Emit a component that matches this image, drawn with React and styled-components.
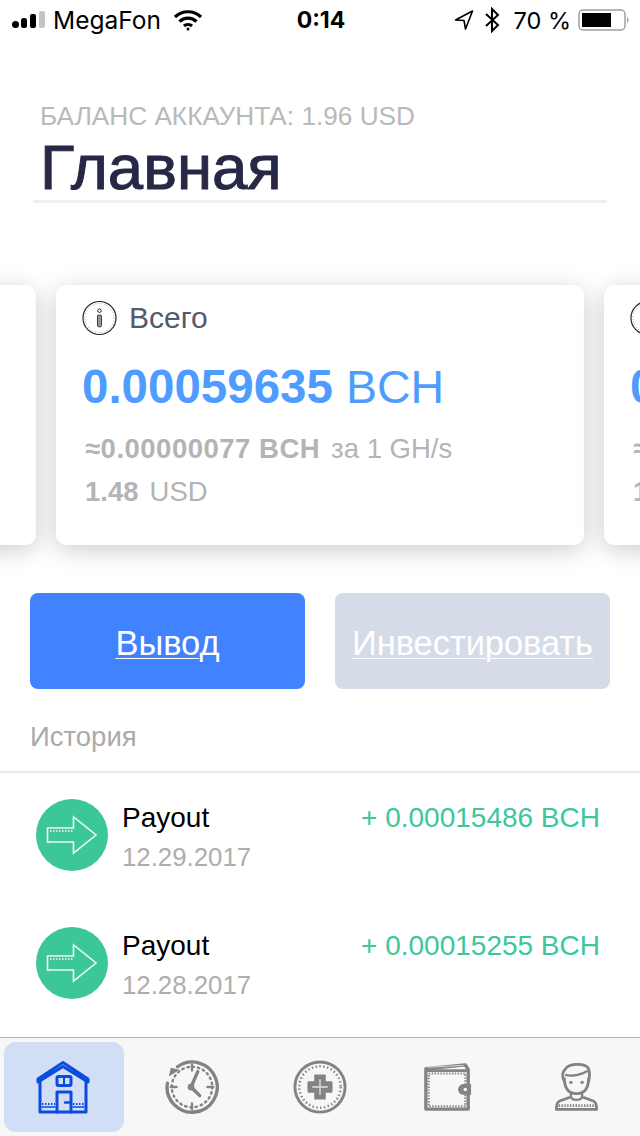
import React from "react";
import styled, { createGlobalStyle } from "styled-components";

const GlobalStyle = createGlobalStyle`
  html, body { margin: 0; padding: 0; background: #fff; }
  * { box-sizing: border-box; }
  body { font-family: "Liberation Sans", Arial, sans-serif; }
`;

const Page = styled.div`
  width: 640px;
  height: 1136px;
  display: flex;
  flex-direction: column;
  overflow: hidden;
  background: #fff;
`;

/* status bar */
const StatusBar = styled.div`
  height: 40px;
  flex: none;
  padding: 0 10px 0 12px;
  display: grid;
  grid-template-columns: 1fr auto 1fr;
  align-items: center;
  font-family: Inter, sans-serif;
  font-size: 23px;
  color: #000;
`;
const StatusSide = styled.div`
  display: flex;
  align-items: center;
  justify-content: ${(p) => (p.$end ? "flex-end" : "flex-start")};
  gap: ${(p) => (p.$end ? "10px" : "8px")};
`;
const Carrier = styled.span`
  font-size: 24.5px;
  margin-right: 4px;
`;
const Percent = styled.span`
  font-size: 23.5px;
  margin: 0 -3px 0 4px;
`;
const StatusTime = styled.div`
  font-weight: 700;
`;

/* header */
const Header = styled.header`
  margin: 62px 33px 0;
  height: 101px;
  border-bottom: 3px solid #eff0f3;
`;
const Balance = styled.div`
  padding-left: 7px;
  margin-bottom: 1px;
  font-size: 26.2px;
  line-height: 28px;
  color: #b9b9b9;
`;
const Title = styled.h1`
  margin: 0;
  padding-left: 7px;
  font-size: 63.5px;
  line-height: 72px;
  font-weight: 400;
  color: #262845;
  -webkit-text-stroke: 1px #262845;
`;

/* cards */
const Carousel = styled.div`
  margin-top: 52px;
  padding: 30px 0 32px;
  display: flex;
  justify-content: center;
  gap: 20px;
  overflow: hidden;
`;
const Card = styled.section`
  flex: none;
  width: 528px;
  height: 260px;
  padding: 15px 26px;
  border-radius: 10px;
  background: #fff;
  box-shadow: 0 5px 24px rgba(0, 0, 0, 0.2);
`;
const CardHead = styled.div`
  display: flex;
  align-items: center;
  gap: 12px;
  font-size: 30px;
  line-height: 36px;
  color: #525a70;
`;
const Amount = styled.div`
  margin-top: 24px;
  font-size: 47.5px;
  line-height: 54px;
  color: #4f9cff;
  white-space: nowrap;
`;
const AmountValue = styled.b`
  font-weight: 700;
`;
const AmountUnit = styled.span`
  font-size: 46.5px;
  font-weight: 400;
  margin-left: 13px;
`;
const Meta = styled.div`
  margin-top: ${(p) => p.$top}px;
  padding-left: 3px;
  font-size: 27.5px;
  line-height: 30px;
  color: #b4b4b4;
  white-space: nowrap;
`;
const MetaValue = styled.b`
  font-weight: 700;
  letter-spacing: ${(p) => (p.$wide ? "0.5px" : "0")};
  margin-right: 11px;
`;

/* buttons */
const Actions = styled.div`
  margin-top: 16px;
  padding: 0 30px;
  display: flex;
  gap: 30px;
`;
const ActionButton = styled.a`
  flex: 1;
  height: 96px;
  padding-top: 4px;
  display: flex;
  align-items: center;
  justify-content: center;
  border-radius: 8px;
  font-size: 34.4px;
  color: #fff;
  text-decoration: underline;
  text-decoration-thickness: 1px;
  text-underline-offset: 3px;
  background: ${(p) => (p.$muted ? "#d5dbe7" : "#4182ff")};
`;

/* history */
const HistoryLabel = styled.div`
  margin-top: 32px;
  padding: 0 30px 18px;
  font-size: 27.5px;
  line-height: 32px;
  color: #aaa;
  border-bottom: 2px solid #e8e8e8;
`;
const HistoryList = styled.div`
  flex: 1;
  padding: 26px 40px 0 36px;
  display: flex;
  flex-direction: column;
  gap: 56px;
  overflow: hidden;
`;
const Row = styled.div`
  display: flex;
  height: 72px;
`;
const RowIcon = styled.div`
  flex: none;
  width: 72px;
  height: 72px;
  margin-right: 14px;
  border-radius: 50%;
  background: #3cc79b;
  display: flex;
  align-items: center;
  justify-content: center;
`;
const RowText = styled.div`
  flex: 1;
  margin-top: 1px;
`;
const RowName = styled.div`
  font-size: 28px;
  line-height: 36px;
  color: #000;
`;
const RowDate = styled.div`
  margin-top: 5px;
  font-size: 25.8px;
  line-height: 32px;
  color: #aeaeae;
`;
const RowAmount = styled.div`
  margin-top: 1px;
  font-size: 28px;
  line-height: 36px;
  color: #3cc79b;
`;

/* tab bar */
const TabBar = styled.nav`
  flex: none;
  height: 99px;
  border-top: 1px solid #b4b4b4;
  background: #f7f7f7;
  display: grid;
  grid-template-columns: repeat(5, 128px);
`;
const Tab = styled.div`
  display: flex;
  align-items: center;
  justify-content: center;
  margin: 4px;
  border-radius: 12px;
  background: ${(p) => (p.$active ? "#d2def6" : "transparent")};
`;

/* drawings */
const Signal = () => (
  <svg width="33" height="24" viewBox="0 0 33 24">
    <circle cx="3.5" cy="16.5" r="3.5" fill="#000" />
    <rect x="9" y="10" width="6" height="10" rx="2.5" fill="#000" />
    <rect x="18" y="6" width="6" height="14" rx="2" fill="#000" />
    <rect x="27" y="3" width="6" height="17" rx="2" fill="#c4c4c4" />
  </svg>
);
const Wifi = () => (
  <svg width="30" height="24" viewBox="0 0 30 24" fill="none" stroke="#000" strokeWidth="3.2">
    <path d="M2 9 C9 2 21 2 28 9" />
    <path d="M6.5 13.5 C11 9 19 9 23.5 13.5" />
    <path d="M11 18 C13 16 17 16 19 18" />
    <circle cx="15" cy="21" r="1.5" fill="#000" stroke="none" />
  </svg>
);
const Location = () => (
  <svg width="20" height="22" viewBox="0 0 20 22" fill="none" stroke="#000" strokeWidth="1.6" strokeLinejoin="round">
    <path d="M18.5 2 L1.5 11 L10 11.5 L11.5 20 Z" />
  </svg>
);
const Bluetooth = () => (
  <svg width="16" height="26" viewBox="0 0 16 26" fill="none" stroke="#000" strokeWidth="2">
    <path d="M2 7 L14 18 L8 24 L8 2 L14 8 L2 19" />
  </svg>
);
const Battery = () => (
  <svg width="52" height="24" viewBox="0 0 52 24">
    <rect x="1" y="2" width="46" height="20" rx="4" fill="none" stroke="#a0a0a0" strokeWidth="1.5" />
    <rect x="4" y="5" width="29" height="14" fill="#000" />
    <path d="M49 9 C51 10 51 14 49 15 Z" fill="#a0a0a0" />
  </svg>
);
const InfoIcon = () => (
  <svg width="35" height="36" viewBox="0 0 36 36" fill="none">
    <circle cx="18" cy="18" r="17" stroke="#222" strokeWidth="1.2" />
    <circle cx="18" cy="18" r="15" stroke="#999" strokeWidth="1" strokeDasharray="1 2" />
    <circle cx="18" cy="10.5" r="1.8" stroke="#222" strokeWidth="1" />
    <rect x="16" y="15" width="4" height="12" rx="1" fill="#999" stroke="#333" strokeWidth="1" />
  </svg>
);
const ArrowIcon = () => (
  <svg width="52" height="40" viewBox="0 0 52 40" fill="none">
    <path d="M1.5 13 H27.5 V2 L50 20 L27.5 38 V27 H1.5 Z" stroke="#e9f9f3" strokeWidth="1.6" strokeLinejoin="miter" />
    <path d="M4 16 H28" stroke="#cdeee2" strokeWidth="2" strokeDasharray="1.5 1.5" />
  </svg>
);
const HomeIcon = () => (
  <svg width="56" height="56" viewBox="0 0 56 56" fill="none" stroke="#0a4be0" strokeWidth="3" strokeLinejoin="round" strokeLinecap="round">
    <path d="M2 20 L27 3.5 L52 20 V23 L27 7.5 L2 23 Z" />
    <path d="M4 22 V53 H50 V22" />
    <rect x="21" y="17.5" width="14" height="9" rx="1.5" strokeWidth="3" />
    <path d="M28 18 V26" strokeWidth="2" />
    <path d="M21 53 V33 H35 V53" />
    <path d="M29 43.5 H33" strokeWidth="2.5" />
    <path d="M6 45 H19 M37 45 H48" strokeWidth="2" strokeDasharray="1.5 1.5" strokeLinecap="butt" />
    <path d="M6 48 H19 M37 48 H48" strokeWidth="1.5" />
  </svg>
);
const ClockIcon = () => (
  <svg width="54" height="54" viewBox="0 0 56 56" fill="none" stroke="#838383" strokeLinecap="round">
    <path d="M13 7 A26 26 0 1 1 2.5 24" strokeWidth="3.5" />
    <path d="M4 17 L6 8 L15 10 Z" fill="#838383" stroke="none" />
    <circle cx="28" cy="28" r="21" strokeWidth="2.5" strokeDasharray="1.5 4" />
    <path d="M28 5 V11 M28 45 V51 M6 28 H12 M44 28 H50" strokeWidth="2.5" />
    <path d="M34 12 L27 28 L36 37" strokeWidth="3.5" strokeLinejoin="round" />
    <circle cx="27" cy="28" r="3.5" fill="#838383" stroke="none" />
  </svg>
);
const PlusIcon = () => (
  <svg width="54" height="54" viewBox="0 0 56 56" fill="none" stroke="#838383">
    <circle cx="28" cy="28" r="26" strokeWidth="3" />
    <circle cx="28" cy="28" r="21.5" strokeWidth="2.5" strokeDasharray="1.5 2.5" />
    <path d="M23 16 H33 V23 H40 V33 H33 V40 H23 V33 H16 V23 H23 Z" fill="#838383" strokeWidth="2" strokeLinejoin="round" />
    <path d="M28 20 V36 M20 28 H36" stroke="#e4e4e4" strokeWidth="1.4" />
  </svg>
);
const WalletIcon = () => (
  <svg width="50" height="50" viewBox="0 0 52 52" fill="none" stroke="#838383" strokeLinejoin="round">
    <path d="M3 7 L44 3 L47 8 V49 H3 Z" strokeWidth="3.5" />
    <path d="M3 9 H47" strokeWidth="3" />
    <path d="M5 5.5 L42 3.5" stroke="#d8d8d8" strokeWidth="1" />
    <rect x="6" y="12" width="38" height="34" stroke="#838383" strokeWidth="2" strokeDasharray="1.5 1.5" />
    <path d="M50 23 H42 A5.5 5.5 0 0 0 42 34 H50 Z" fill="#838383" stroke="none" />
    <circle cx="44" cy="28.5" r="1.8" fill="#f7f7f7" stroke="none" />
  </svg>
);
const UserIcon = () => (
  <svg width="43" height="50" viewBox="0 0 46 52" fill="none" stroke="#838383" strokeLinejoin="round">
    <path d="M10 20 C7 14 8 9 11 7 C14 1 30 0 35 5 C38 9 37 15 36 20" strokeWidth="3" />
    <path d="M11 13 C18 15 28 13 35 9" strokeWidth="2.5" />
    <path d="M10 16 C10 28 15 33 23 33 C31 33 36 28 36 16" strokeWidth="3" />
    <circle cx="17" cy="21" r="1.8" fill="#838383" stroke="none" />
    <circle cx="29" cy="21" r="1.8" fill="#838383" stroke="none" />
    <path d="M17 32 V36 C17 41 29 41 29 36 V32" strokeWidth="2.5" />
    <path d="M16 37 L5 41 C2 42 1.5 45 1.5 50 H44.5 C44.5 45 44 42 41 41 L30 37" strokeWidth="3" />
    <path d="M4 46 H42" strokeWidth="3" strokeDasharray="1.5 1.5" />
  </svg>
);

const SummaryCard = () => (
  <Card>
    <CardHead>
      <InfoIcon />
      Всего
    </CardHead>
    <Amount>
      <AmountValue>0.00059635</AmountValue>
      <AmountUnit>BCH</AmountUnit>
    </Amount>
    <Meta $top={20}>
      <MetaValue $wide>≈0.00000077 BCH</MetaValue>за 1 GH/s
    </Meta>
    <Meta $top={13}>
      <MetaValue>1.48</MetaValue>USD
    </Meta>
  </Card>
);

const payouts = [
  { date: "12.29.2017", amount: "+ 0.00015486 BCH" },
  { date: "12.28.2017", amount: "+ 0.00015255 BCH" },
];

export default function App() {
  return (
    <Page>
      <GlobalStyle />
      <StatusBar>
        <StatusSide>
          <Signal />
          <Carrier>MegaFon</Carrier>
          <Wifi />
        </StatusSide>
        <StatusTime>0:14</StatusTime>
        <StatusSide $end>
          <Location />
          <Bluetooth />
          <Percent>70 %</Percent>
          <Battery />
        </StatusSide>
      </StatusBar>

      <Header>
        <Balance>БАЛАНС АККАУНТА: 1.96 USD</Balance>
        <Title>Главная</Title>
      </Header>

      <Carousel>
        <SummaryCard />
        <SummaryCard />
        <SummaryCard />
      </Carousel>

      <Actions>
        <ActionButton>Вывод</ActionButton>
        <ActionButton $muted>Инвестировать</ActionButton>
      </Actions>

      <HistoryLabel>История</HistoryLabel>
      <HistoryList>
        {payouts.map((p) => (
          <Row key={p.date}>
            <RowIcon>
              <ArrowIcon />
            </RowIcon>
            <RowText>
              <RowName>Payout</RowName>
              <RowDate>{p.date}</RowDate>
            </RowText>
            <RowAmount>{p.amount}</RowAmount>
          </Row>
        ))}
      </HistoryList>

      <TabBar>
        <Tab $active><HomeIcon /></Tab>
        <Tab><ClockIcon /></Tab>
        <Tab><PlusIcon /></Tab>
        <Tab><WalletIcon /></Tab>
        <Tab><UserIcon /></Tab>
      </TabBar>
    </Page>
  );
}
